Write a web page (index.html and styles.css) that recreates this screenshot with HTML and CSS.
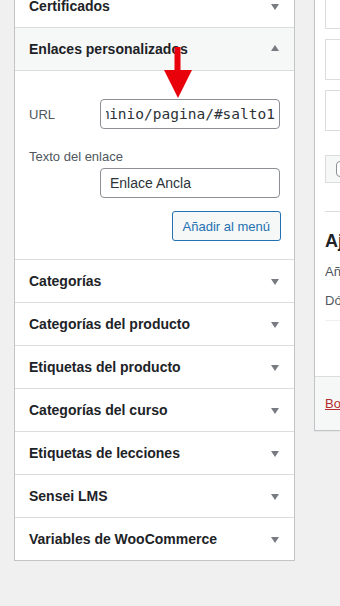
FILE: index.html
```html
<!DOCTYPE html>
<html lang="es">
<head>
  <meta charset="UTF-8" />
  <meta name="viewport" content="width=device-width, initial-scale=1.0"/>
  <title>Menús</title>
  <link rel="stylesheet" href="styles.css">
</head>
<body>

  <div class="wrap">

    <!-- Acordeón de elementos del menú -->
    <div class="accordion">
      <div class="section">
        <h3 class="section-title">Certificados <span class="toggle"></span></h3>
      </div>

      <div class="section open">
        <h3 class="section-title">Enlaces personalizados <span class="toggle up"></span></h3>
        <div class="section-body">
          <div class="field field-url">
            <label>URL</label>
            <div class="input mono"><div class="clip"><span>http://dominio/pagina/#salto1</span></div></div>
          </div>
          <div class="field field-text">
            <label>Texto del enlace</label>
            <div class="input"><span>Enlace Ancla</span></div>
          </div>
          <div class="actions">
            <button class="button">Añadir al menú</button>
          </div>
        </div>

        <!-- flecha roja -->
        <svg class="red-arrow" width="30" height="52" viewBox="0 0 30 52">
          <rect x="11.5" y="0" width="6" height="26" fill="#e8000b"/>
          <polygon points="1,23 29,23 15,51" fill="#e8000b"/>
        </svg>
      </div>

      <div class="section"><h3 class="section-title">Categorías <span class="toggle"></span></h3></div>
      <div class="section"><h3 class="section-title">Categorías del producto <span class="toggle"></span></h3></div>
      <div class="section"><h3 class="section-title">Etiquetas del producto <span class="toggle"></span></h3></div>
      <div class="section"><h3 class="section-title">Categorías del curso <span class="toggle"></span></h3></div>
      <div class="section"><h3 class="section-title">Etiquetas de lecciones <span class="toggle"></span></h3></div>
      <div class="section"><h3 class="section-title">Sensei LMS <span class="toggle"></span></h3></div>
      <div class="section"><h3 class="section-title">Variables de WooCommerce <span class="toggle"></span></h3></div>
    </div>

    <!-- Estructura del menú (cortada) -->
    <div class="menu-panel">
      <div class="menu-body">
        <div class="menu-item"></div>
        <div class="menu-item"></div>
        <div class="menu-item"></div>
        <div class="bulk"><span class="check"></span></div>
        <div class="settings">
          <h3>Ajustes del menú</h3>
          <p>Añadir páginas automáticamente</p>
          <p class="last">Dónde se mostrará</p>
        </div>
      </div>
      <div class="menu-footer">
        <a href="#">Borrar menú</a>
      </div>
    </div>

  </div>

</body>
</html>
```

FILE: styles.css
```css
html, body {
  margin: 0;
  overflow: hidden;
}

body {
  background: #f0f0f1;
  font-family: "Liberation Sans", Arial, sans-serif;
  color: #1d2327;
  font-size: 13px;
}

.wrap {
  display: flex;
  align-items: flex-start;
  gap: 19px;
  padding-left: 14px;
  margin-top: -16px;
}

/* ACORDEÓN */
.accordion {
  width: 279px;
  flex-shrink: 0;
  background: #fff;
  border: 1px solid #c3c4c7;
}

.section {
  position: relative;
  border-bottom: 1px solid #dcdcde;
}

.section:last-child {
  border-bottom: none;
}

.section-title {
  margin: 0;
  height: 42px;
  display: flex;
  align-items: center;
  justify-content: space-between;
  padding: 0 15px 0 14px;
  font-size: 14px;
  font-weight: bold;
  color: #1d2327;
}

.open .section-title {
  background: #f6f7f7;
  border-bottom: 1px solid #dcdcde;
}

/* triangolo */
.toggle {
  width: 0;
  height: 0;
  border-left: 4px solid transparent;
  border-right: 4px solid transparent;
  border-top: 6px solid #787c82;
  margin-top: 2px;
}

.toggle.up {
  border-top: none;
  border-bottom: 6px solid #787c82;
  margin-top: -2px;
}

.section-body {
  padding: 28px 13px 18px 14px;
}

.field label {
  color: #50575e;
  font-size: 13px;
}

.field-url {
  display: flex;
  align-items: center;
  justify-content: space-between;
}

.field-text {
  margin-top: 20px;
  display: flex;
  flex-direction: column;
  align-items: flex-end;
}

.field-text label {
  align-self: flex-start;
  line-height: 16px;
}

.input {
  height: 28px;
  margin-right: 1px;
  border: 1px solid #8c8f94;
  border-radius: 4px;
  display: flex;
  align-items: center;
  padding: 0 9px;
  box-sizing: content-box;
  width: 160px;
  overflow: hidden;
  white-space: nowrap;
  font-size: 14px;
  color: #2c3338;
}

.field-text .input {
  margin-top: 3px;
}

.mono {
  font-family: "DejaVu Sans Mono", "Liberation Mono", monospace;
  font-size: 14.5px;
  padding: 0 4px 0 5px;
  width: 169px;
}

.clip {
  flex: 1;
  display: flex;
  justify-content: flex-end;
  overflow: hidden;
}

.actions {
  display: flex;
  justify-content: flex-end;
  margin-top: 13px;
}

.button {
  font-family: inherit;
  font-size: 13px;
  color: #2271b1;
  background: #f6f7f7;
  border: 1px solid #2271b1;
  border-radius: 3px;
  height: 30px;
  padding: 0 10px;
}

.red-arrow {
  position: absolute;
  left: 148px;
  top: 19px;
}

/* PANEL DERECHO */
.menu-panel {
  flex: 1;
  min-width: 200px;
  background: #fff;
  border: 1px solid #c3c4c7;
  box-shadow: 0 1px 1px rgba(0,0,0,0.04);
}

.menu-body {
  padding: 3px 0 0 10px;
}

.menu-item {
  height: 39px;
  border: 1px solid #dcdcde;
  margin-bottom: 10px;
}

.bulk {
  margin-top: 24px;
  height: 26px;
  border: 1px solid #dcdcde;
  background: #f6f7f7;
  display: flex;
  align-items: center;
  padding-left: 10px;
}

.check {
  width: 14px;
  height: 14px;
  border: 1px solid #8c8f94;
  border-radius: 4px;
  background: #fff;
}

.settings {
  margin-top: 28px;
  border-top: 1px solid #dcdcde;
  padding-top: 18px;
}

.settings h3 {
  margin: 0;
  font-size: 18px;
  font-weight: bold;
  line-height: 22px;
  white-space: nowrap;
}

.settings p {
  margin: 10px 0 0;
  color: #50575e;
  white-space: nowrap;
  line-height: 19px;
}

.settings p.last {
  margin-top: 10px;
  padding-bottom: 10px;
  border-bottom: 1px solid #f0f0f1;
  margin-bottom: 55px;
}

.menu-footer {
  border-top: 1px solid #dcdcde;
  background: #f6f7f7;
  height: 53px;
  display: flex;
  align-items: center;
  padding-left: 10px;
}

.menu-footer a {
  color: #b32d2e;
  white-space: nowrap;
}
```
